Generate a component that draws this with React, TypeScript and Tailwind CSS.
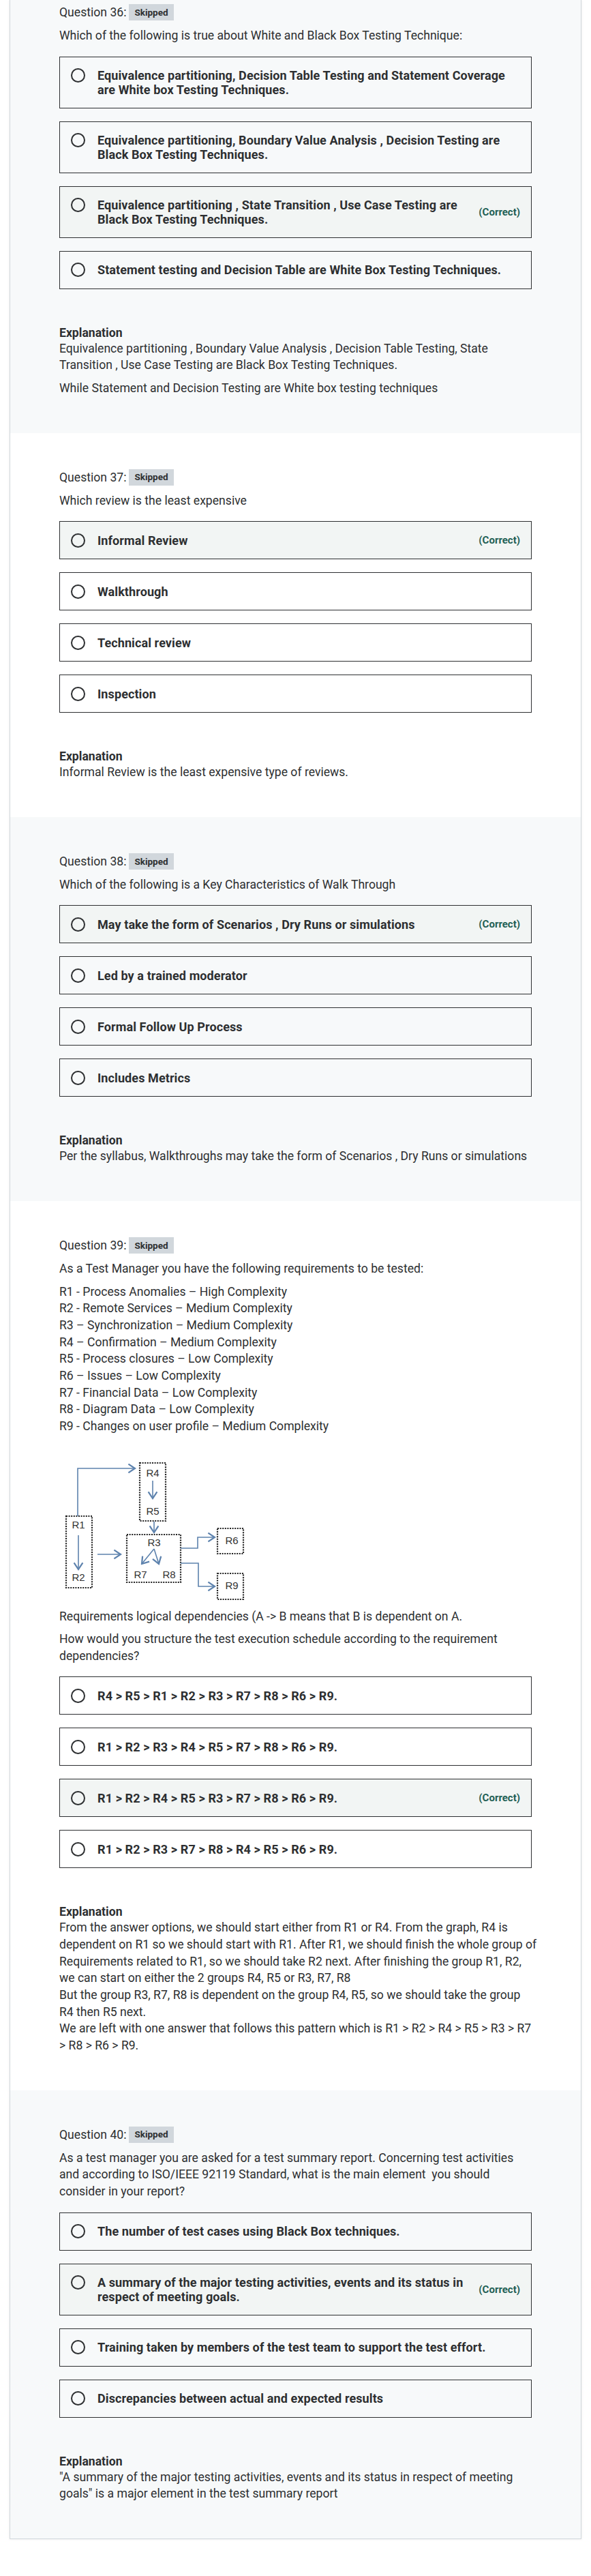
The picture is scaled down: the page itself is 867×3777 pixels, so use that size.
import React from 'react';

type Opt = { text: string; correct?: boolean };

interface QuestionData {
  n: number;
  shaded: boolean;
  first?: boolean;
  prompt: React.ReactNode;
  options: Opt[];
  explanation: React.ReactNode;
}

function Radio() {
  return <span className="h-[21px] w-[21px] shrink-0 rounded-full border-2 border-[#2d2f31]" />;
}

function Option({ text, correct }: Opt) {
  return (
    <div
      className={`flex min-h-[56px] items-center border border-[#2d2f31] px-4 py-4 ${correct ? 'bg-[#f2f5f4]' : ''}`}
    >
      <div className="flex flex-1 items-start gap-[18px]">
        <Radio />
        <span className="text-[18px] font-bold leading-[21px] tracking-[0.1px]">{text}</span>
      </div>
      {correct && (
        <span className="ml-4 shrink-0 text-[15px] font-bold leading-5 text-[#1e6055]">(Correct)</span>
      )}
    </div>
  );
}

function Arrow({ d }: { d: string }) {
  return <path d={d} fill="none" stroke="#5d82ad" strokeWidth="1.6" markerEnd="url(#head)" />;
}

function DotBox({ x, y, w, h }: { x: number; y: number; w: number; h: number }) {
  return (
    <rect
      x={x}
      y={y}
      width={w}
      height={h}
      fill="none"
      stroke="#222"
      strokeWidth="2.2"
      strokeDasharray="2 1.6"
    />
  );
}

// requirement dependency graph (R1..R9)
function Diagram() {
  const labels: [string, number, number][] = [
    ['R4', 137, 52],
    ['R5', 137, 108],
    ['R1', 28, 128],
    ['R2', 28, 205],
    ['R3', 139, 154],
    ['R7', 119, 201],
    ['R8', 161, 201],
    ['R6', 253, 151],
    ['R9', 253, 217],
  ];
  return (
    <svg width="280" height="237" viewBox="0 0 280 237" className="block">
      <defs>
        <marker id="head" markerWidth="8" markerHeight="10" refX="7" refY="5" orient="auto">
          <path d="M1,1 L7,5 L1,9" fill="none" stroke="#5d82ad" strokeWidth="1.4" />
        </marker>
      </defs>
      <DotBox x={118} y={32} w={38} h={85} />
      <DotBox x={10} y={110} w={38} h={105} />
      <DotBox x={99} y={137} w={79} h={70} />
      <DotBox x={232} y={128} w={38} h={37} />
      <DotBox x={232} y={194} w={38} h={38} />
      <Arrow d="M137,58 L137,84" />
      <Arrow d="M28,138 L28,188" />
      <Arrow d="M27,110 L27,40 L111,40" />
      <Arrow d="M56,166 L90,166" />
      <Arrow d="M139,118 L139,134" />
      <Arrow d="M139,158 L121,180" />
      <Arrow d="M139,158 L146,180" />
      <Arrow d="M178,157 L203,157 L203,141 L228,141" />
      <Arrow d="M178,179 L204,179 L204,213 L228,213" />
      {labels.map(([t, x, y]) => (
        <text
          key={t}
          x={x}
          y={y}
          textAnchor="middle"
          fontSize="15"
          fill="#333"
          fontFamily="'Liberation Sans', Arial, sans-serif"
        >
          {t}
        </text>
      ))}
    </svg>
  );
}

const questions: QuestionData[] = [
  {
    n: 36,
    shaded: true,
    first: true,
    prompt: <p>Which of the following is true about White and Black Box Testing Technique:</p>,
    options: [
      { text: 'Equivalence partitioning, Decision Table Testing and Statement Coverage are White box Testing Techniques.' },
      { text: 'Equivalence partitioning, Boundary Value Analysis , Decision Testing are Black Box Testing Techniques.' },
      { text: 'Equivalence partitioning , State Transition , Use Case Testing are Black Box Testing Techniques.', correct: true },
      { text: 'Statement testing and Decision Table are White Box Testing Techniques.' },
    ],
    explanation: (
      <>
        <p>
          Equivalence partitioning , Boundary Value Analysis , Decision Table Testing, State Transition , Use Case
          Testing are Black Box Testing Techniques.
        </p>
        <p className="mt-[9px]">While Statement and Decision Testing are White box testing techniques</p>
      </>
    ),
  },
  {
    n: 37,
    shaded: false,
    prompt: <p>Which review is the least expensive</p>,
    options: [
      { text: 'Informal Review', correct: true },
      { text: 'Walkthrough' },
      { text: 'Technical review' },
      { text: 'Inspection' },
    ],
    explanation: <p>Informal Review is the least expensive type of reviews.</p>,
  },
  {
    n: 38,
    shaded: true,
    prompt: <p>Which of the following is a Key Characteristics of Walk Through</p>,
    options: [
      { text: 'May take the form of Scenarios , Dry Runs or simulations', correct: true },
      { text: 'Led by a trained moderator' },
      { text: 'Formal Follow Up Process' },
      { text: 'Includes Metrics' },
    ],
    explanation: <p>Per the syllabus, Walkthroughs may take the form of Scenarios , Dry Runs or simulations</p>,
  },
  {
    n: 39,
    shaded: false,
    prompt: (
      <>
        <p>As a Test Manager you have the following requirements to be tested:</p>
        <p className="mt-[9px]">
          R1 - Process Anomalies – High Complexity
          <br />
          R2 - Remote Services – Medium Complexity
          <br />
          R3 – Synchronization – Medium Complexity
          <br />
          R4 – Confirmation – Medium Complexity
          <br />
          R5 - Process closures – Low Complexity
          <br />
          R6 – Issues – Low Complexity
          <br />
          R7 - Financial Data – Low Complexity
          <br />
          R8 - Diagram Data – Low Complexity
          <br />
          R9 - Changes on user profile – Medium Complexity
        </p>
        <div className="mt-[9px]">
          <Diagram />
        </div>
        <p className="mt-2">Requirements logical dependencies (A -&gt; B means that B is dependent on A.</p>
        <p className="mt-[9px]">
          How would you structure the test execution schedule according to the requirement dependencies?
        </p>
      </>
    ),
    options: [
      { text: 'R4 > R5 > R1 > R2 > R3 > R7 > R8 > R6 > R9.' },
      { text: 'R1 > R2 > R3 > R4 > R5 > R7 > R8 > R6 > R9.' },
      { text: 'R1 > R2 > R4 > R5 > R3 > R7 > R8 > R6 > R9.', correct: true },
      { text: 'R1 > R2 > R3 > R7 > R8 > R4 > R5 > R6 > R9.' },
    ],
    explanation: (
      <p>
        From the answer options, we should start either from R1 or R4. From the graph, R4 is
        <br />
        <span className="whitespace-nowrap">
          dependent on R1 so we should start with R1. After R1, we should finish the whole group of
        </span>
        <br />
        Requirements related to R1, so we should take R2 next. After finishing the group R1, R2,
        <br />
        we can start on either the 2 groups R4, R5 or R3, R7, R8
        <br />
        But the group R3, R7, R8 is dependent on the group R4, R5, so we should take the group R4 then R5 next.
        <br />
        We are left with one answer that follows this pattern which is R1 &gt; R2 &gt; R4 &gt; R5 &gt; R3 &gt; R7
        &gt; R8 &gt; R6 &gt; R9.
      </p>
    ),
  },
  {
    n: 40,
    shaded: true,
    prompt: (
      <p>
        As a test manager you are asked for a test summary report. Concerning test activities and according to
        ISO/IEEE 92119 Standard, what is the main element&nbsp; you should consider in your report?
      </p>
    ),
    options: [
      { text: 'The number of test cases using Black Box techniques.' },
      {
        text: 'A summary of the major testing activities, events and its status in respect of meeting goals.',
        correct: true,
      },
      { text: 'Training taken by members of the test team to support the test effort.' },
      { text: 'Discrepancies between actual and expected results' },
    ],
    explanation: (
      <p>
        "A summary of the major testing activities, events and its status in respect of meeting goals" is a major
        element in the test summary report
      </p>
    ),
  },
];

function Question({ q }: { q: QuestionData }) {
  return (
    <section
      className={`px-[72px] pb-[53px] ${q.first ? 'pt-[6px]' : 'pt-[53px]'} ${q.shaded ? 'bg-[#f7f9fa]' : 'bg-white'}`}
    >
      <div className="flex items-center gap-1">
        <span className="leading-6">Question {q.n}:</span>
        <span className="flex h-6 items-center bg-[#d1d7dc] px-2 text-[13.5px] font-bold">Skipped</span>
      </div>
      <div className="mt-[10px]">{q.prompt}</div>
      <div className="mt-[18px] flex flex-col gap-[19px]">
        {q.options.map((o, i) => (
          <Option key={i} {...o} />
        ))}
      </div>
      <div className="mt-[53px]">
        <h4 className="font-bold leading-[22px]">Explanation</h4>
        <div>{q.explanation}</div>
      </div>
    </section>
  );
}

export default function App() {
  return (
    <div className="min-h-screen bg-white pb-[63px] font-['Roboto','Liberation_Sans',sans-serif] text-[17.6px] leading-[24.64px] text-[#2d2f31]">
      <div className="mx-[14px] border-x border-b border-[#d1d7dc] shadow-[0_0_4px_rgba(0,0,0,0.08)]">
        {questions.map((q) => (
          <Question key={q.n} q={q} />
        ))}
      </div>
    </div>
  );
}
